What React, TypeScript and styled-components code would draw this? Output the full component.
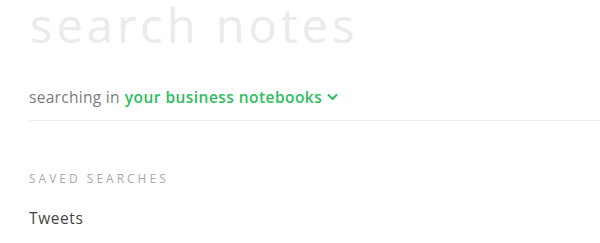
import React from "react";
import styled, { createGlobalStyle } from "styled-components";

const GlobalStyle = createGlobalStyle`
  html, body {
    margin: 0;
    padding: 0;
    background: #ffffff;
    font-family: "Open Sans", "Lato", sans-serif;
  }
`;

const Page = styled.div`
  width: 600px;
  height: 243px;
  overflow: hidden;
  padding-left: 29px;
  box-sizing: border-box;
`;

const SearchInput = styled.input`
  display: block;
  width: 100%;
  border: none;
  outline: none;
  padding: 0;
  margin: 0 0 8px 1px;
  height: 50px;
  font-family: "Open Sans", sans-serif;
  font-size: 47px;
  font-weight: 400;
  letter-spacing: 4px;
  color: #333;
  background: transparent;

  &::placeholder {
    color: #ebebeb;
  }
`;

const ScopeRow = styled.div`
  display: flex;
  align-items: center;
  height: 63px;
  padding-top: 15px;
  box-sizing: border-box;
  border-bottom: 1px solid #eeeeee;
  font-size: 15.5px;
  letter-spacing: 0.3px;
  color: #7c7c7c;
`;

const Scope = styled.button`
  display: inline-flex;
  align-items: center;
  gap: 5px;
  margin-left: 5px;
  padding: 0;
  border: none;
  background: none;
  font: inherit;
  font-weight: 600;
  letter-spacing: 0.45px;
  color: #2dbe60;
  cursor: pointer;
`;

const Section = styled.div`
  display: flex;
  flex-direction: column;
  padding-top: 49px;
`;

const SectionTitle = styled.div`
  font-size: 12px;
  letter-spacing: 3px;
  color: #aaaaaa;
  text-transform: uppercase;
`;

const SavedItem = styled.div`
  margin-top: 20px;
  font-size: 15.5px;
  color: #444444;
  letter-spacing: 0.6px;
`;

function Chevron() {
  return (
    <svg width="11" height="8" viewBox="0 0 11 8" fill="none">
      <path d="M1.5 2 L5.5 6 L9.5 2" stroke="#2dbe60" strokeWidth="2" strokeLinecap="round" strokeLinejoin="round" />
    </svg>
  );
}

export default function App() {
  return (
    <Page>
      <GlobalStyle />
      <SearchInput placeholder="search notes" />
      <ScopeRow>
        searching in
        <Scope>
          your business notebooks
          <Chevron />
        </Scope>
      </ScopeRow>
      <Section>
        <SectionTitle>Saved Searches</SectionTitle>
        <SavedItem>Tweets</SavedItem>
      </Section>
    </Page>
  );
}
